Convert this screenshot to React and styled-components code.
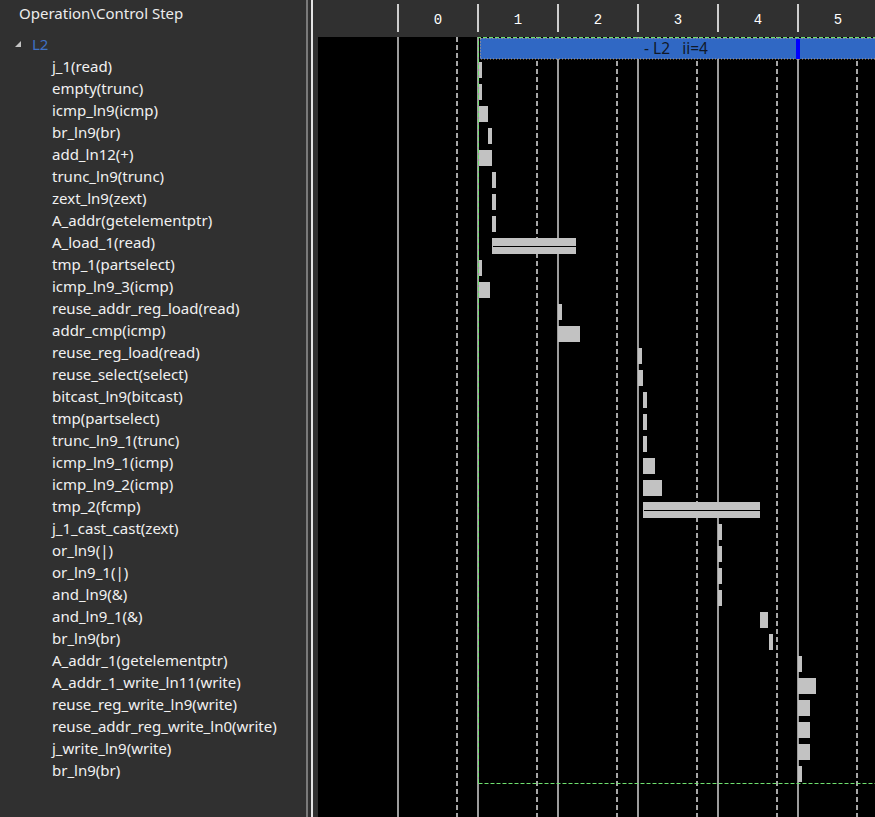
import React from "react";
import styled, { createGlobalStyle } from "styled-components";

const Global = createGlobalStyle`
  html, body { margin: 0; padding: 0; background: #303030; overflow: hidden; }
  #root { width: 875px; height: 817px; }
`;

const OPS = [
  ["j_1(read)", 479, 482],
  ["empty(trunc)", 479, 482],
  ["icmp_ln9(icmp)", 479, 488],
  ["br_ln9(br)", 488, 492],
  ["add_ln12(+)", 479, 492],
  ["trunc_ln9(trunc)", 492, 496],
  ["zext_ln9(zext)", 492, 496],
  ["A_addr(getelementptr)", 492, 496],
  ["A_load_1(read)", 492, 576, true],
  ["tmp_1(partselect)", 479, 482],
  ["icmp_ln9_3(icmp)", 479, 490],
  ["reuse_addr_reg_load(read)", 558, 562],
  ["addr_cmp(icmp)", 558, 580],
  ["reuse_reg_load(read)", 638, 642],
  ["reuse_select(select)", 638, 643],
  ["bitcast_ln9(bitcast)", 643, 647],
  ["tmp(partselect)", 643, 647],
  ["trunc_ln9_1(trunc)", 643, 647],
  ["icmp_ln9_1(icmp)", 643, 655],
  ["icmp_ln9_2(icmp)", 643, 662],
  ["tmp_2(fcmp)", 643, 760, true],
  ["j_1_cast_cast(zext)", 718, 722],
  ["or_ln9(|)", 718, 722],
  ["or_ln9_1(|)", 718, 722],
  ["and_ln9(&)", 718, 722],
  ["and_ln9_1(&)", 760, 768],
  ["br_ln9(br)", 769, 773],
  ["A_addr_1(getelementptr)", 798, 802],
  ["A_addr_1_write_ln11(write)", 798, 816],
  ["reuse_reg_write_ln9(write)", 798, 810],
  ["reuse_addr_reg_write_ln0(write)", 798, 810],
  ["j_write_ln9(write)", 798, 810],
  ["br_ln9(br)", 798, 802],
];

const STEPS = [0, 1, 2, 3, 4, 5];
const X0 = 318; // chart body left edge
const Y0 = 37; // chart body top edge

const Frame = styled.div`
  display: flex;
  width: 875px;
  height: 817px;
  background: #303030;
  font-family: "Noto Sans", "Open Sans", sans-serif;
  overflow: hidden;
`;

const LeftPanel = styled.div`
  width: 306px;
  flex: none;
  display: flex;
  flex-direction: column;
  color: #f1f1f1;
  font-size: 15px;
`;

const LeftHeader = styled.div`
  height: 33px;
  box-sizing: border-box;
  padding: 2px 0 0 19px;
  line-height: 22px;
  color: #ececec;
`;

const TreeRow = styled.div`
  height: 22px;
  line-height: 22px;
  display: flex;
  align-items: center;
  padding-left: ${(p) => p.$indent}px;
  color: ${(p) => (p.$group ? "#3f71c4" : "#f1f1f1")};
  white-space: nowrap;
`;

const Expander = styled.svg`
  width: 8px;
  height: 8px;
  margin-right: 10px;
  flex: none;
`;

const Splitter = styled.div`
  width: 3px;
  flex: none;
  border-left: 2px solid #7a7a7a;
  border-right: 2px solid #e4e4e4;
`;

const ChartPanel = styled.div`
  flex: 1;
  display: flex;
  flex-direction: column;
  padding-left: 5px;
  min-width: 0;
`;

const StepHeader = styled.div`
  height: 37px;
  flex: none;
  display: flex;
  padding-left: 79px;
`;

const StepColumn = styled.div`
  width: 80px;
  flex: none;
  display: flex;
`;

const Tick = styled.div`
  width: 2px;
  height: 28px;
  margin-top: 4px;
  background: #cfcfcf;
  flex: none;
`;

const StepLabel = styled.div`
  flex: 1;
  text-align: center;
  font-family: "Liberation Mono", monospace;
  font-size: 14px;
  line-height: 16px;
  padding-top: 12px;
  color: #ffffff;
`;

const ChartBody = styled.svg`
  display: block;
  flex: none;
  background: #000;
`;

function Schedule() {
  const W = 875 - X0;
  const H = 817 - Y0;
  const loopBottom = 783 - Y0;
  return (
    <ChartBody width={W} height={H} viewBox={`0 0 ${W} ${H}`}>
      {STEPS.map((s) => (
        <line
          key={"s" + s}
          x1={80 + 80 * s}
          x2={80 + 80 * s}
          y1={0}
          y2={H}
          stroke="#9c9c9c"
          strokeWidth="2"
        />
      ))}
      {STEPS.map((s) => (
        <line
          key={"d" + s}
          x1={139 + 80 * s}
          x2={139 + 80 * s}
          y1={0}
          y2={H}
          stroke="#a6a6a6"
          strokeWidth="2"
          strokeDasharray="5 3"
        />
      ))}
      <rect x="162" y="1" width={W - 162 + 2} height="21" fill="#3068c4" />
      <rect
        x="162.5"
        y="1.5"
        width={W - 162 + 2}
        height="20.5"
        fill="none"
        stroke="#c9a77c"
        strokeWidth="1"
        strokeDasharray="1 2"
      />
      <text
        x="358"
        y="17"
        textAnchor="middle"
        fontFamily='"Noto Sans", sans-serif'
        fontSize="15.5"
        fill="#101828"
        style={{ whiteSpace: "pre" }}
      >
        {"- L2   ii=4"}
      </text>
      <rect x="478" y="2" width="4" height="20" fill="#0000ff" />
      {OPS.map(([name, a, b, dbl], i) => {
        const y = 25 + 22 * i;
        return (
          <g key={i}>
            <rect x={a - X0} y={y} width={b - a} height="16" fill="#c2c2c2" />
            {dbl && (
              <rect x={a - X0 + 1} y={y + 8} width={b - a - 1} height="1" fill="#000" />
            )}
          </g>
        );
      })}
      <path
        d={`M160.5 ${loopBottom} V0.5 H${W} M160.5 ${loopBottom + 0.5} H${W}`}
        fill="none"
        stroke="#6fe06f"
        strokeWidth="1"
        strokeDasharray="4 2"
      />
    </ChartBody>
  );
}

export default function App() {
  return (
    <Frame>
      <Global />
      <LeftPanel>
        <LeftHeader>Operation\Control Step</LeftHeader>
        <TreeRow $indent={14} $group>
          <Expander viewBox="0 0 8 8">
            <polygon points="7,1 7,7 1,7" fill="#c4c4c4" />
          </Expander>
          L2
        </TreeRow>
        {OPS.map(([name], i) => (
          <TreeRow key={i} $indent={52}>
            {name}
          </TreeRow>
        ))}
      </LeftPanel>
      <Splitter />
      <ChartPanel>
        <StepHeader>
          {STEPS.map((s) => (
            <StepColumn key={s}>
              <Tick />
              <StepLabel>{s}</StepLabel>
            </StepColumn>
          ))}
        </StepHeader>
        <Schedule />
      </ChartPanel>
    </Frame>
  );
}
